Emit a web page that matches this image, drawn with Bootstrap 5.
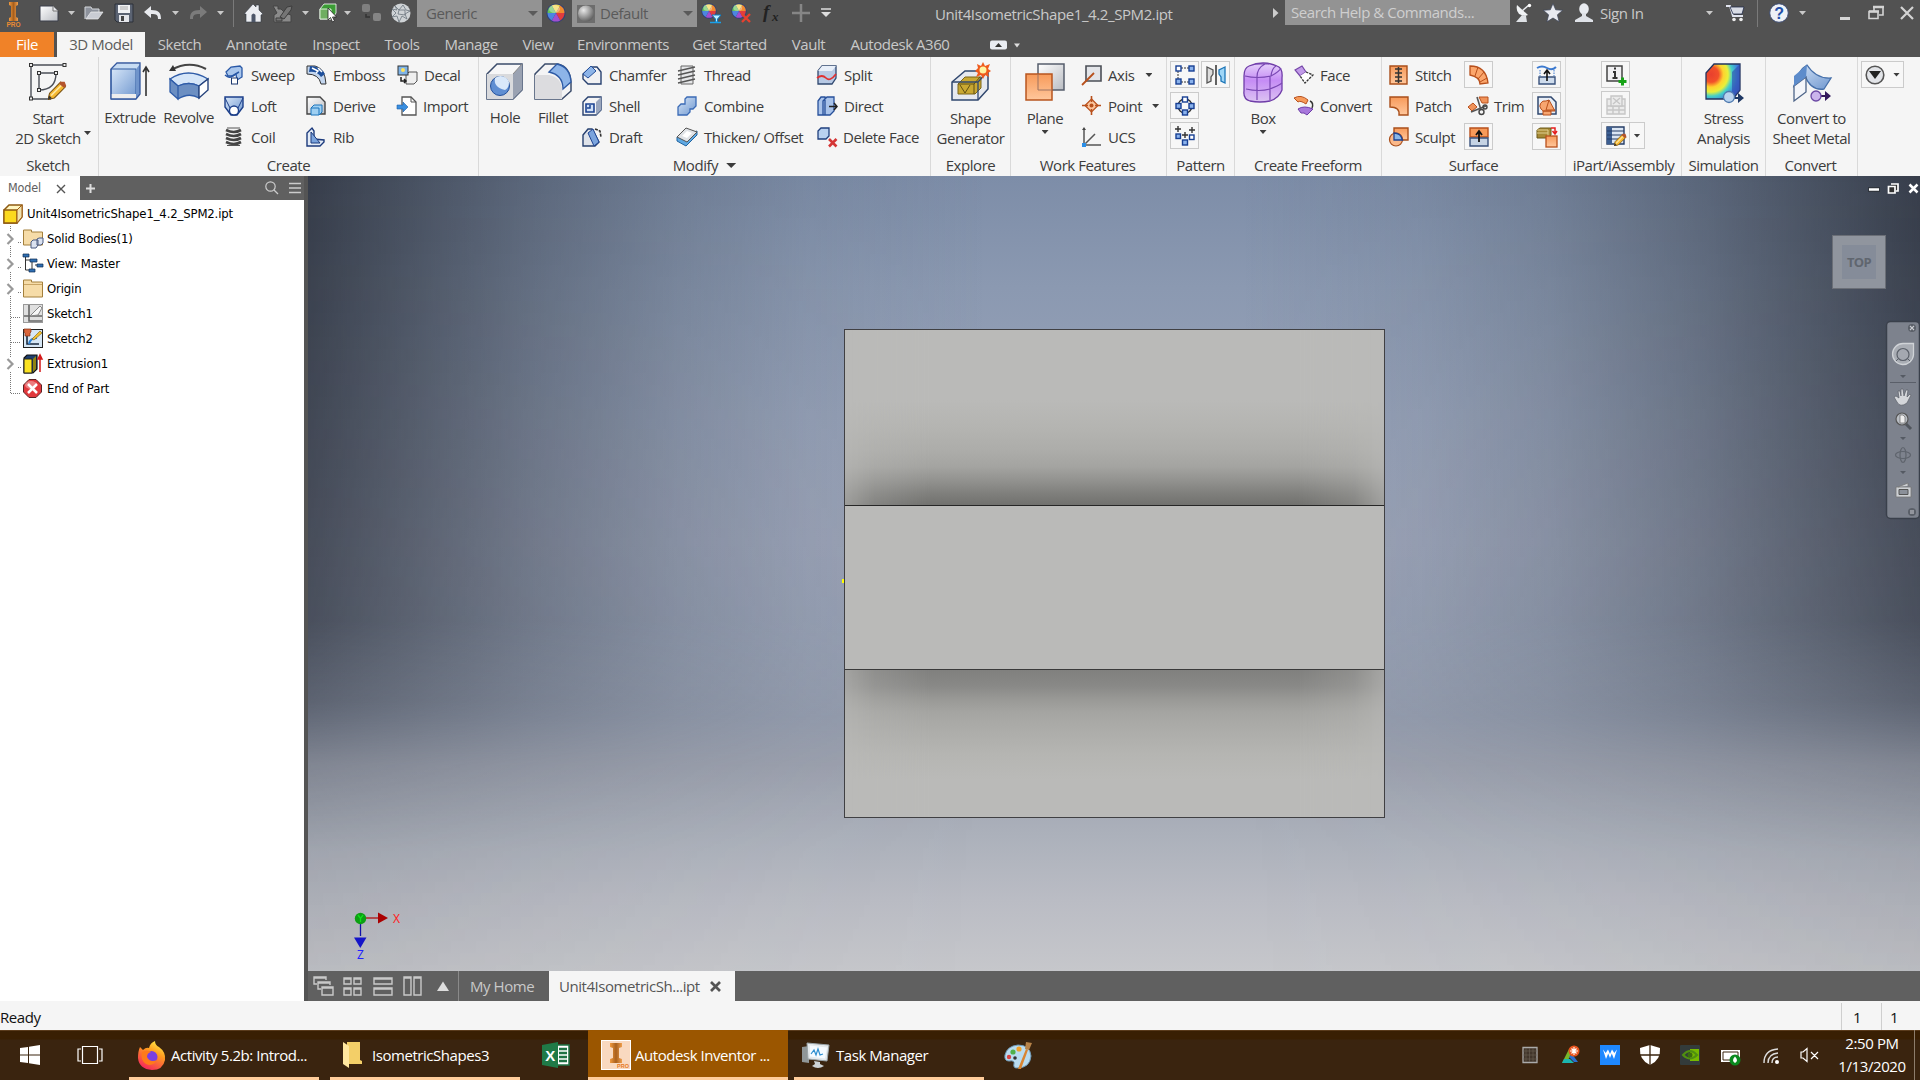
<!DOCTYPE html>
<html lang="en">
<head>
<meta charset="utf-8">
<title>Autodesk Inventor Professional</title>
<link href="https://cdn.jsdelivr.net/npm/bootstrap@5.3.0/dist/css/bootstrap.min.css" rel="stylesheet">
<style>
html,body{height:100%}
body{font-family:"Open Sans","Noto Sans",sans-serif;font-size:15px;letter-spacing:-.45px;line-height:20px;color:#3c3c3c;overflow:hidden;background:#f5f5f5;width:1920px;height:1080px}
svg{display:block;flex:none;overflow:visible}
.i20{width:20px;height:20px}.i40{width:40px;height:40px}
.topbar{height:32px;background:#525252;color:#c9c9c9;align-items:flex-start}
.topbar>svg{margin-top:3px}
.topbar>svg.app-logo{margin-top:2px}
.topbar>.tri{margin-top:11px}
.m1{margin-left:1px}.m4{margin-left:4px}.m5{margin-left:5px}.m6{margin-left:6px}.m7{margin-left:7px}.m8{margin-left:8px}.m9{margin-left:9px}.m10{margin-left:10px}.m11{margin-left:11px}.m12{margin-left:12px}.m18{margin-left:18px}.m20{margin-left:20px}.m22{margin-left:22px}.m26{margin-left:26px}.m27{margin-left:27px}.m34{margin-left:34px}.m37{margin-left:37px}.m56{margin-left:56px}.m103{margin-left:103px}
.tri{width:7px;height:4px;background:currentColor;clip-path:polygon(0 0,100% 0,50% 100%);flex:none}
.tri-l{width:10px;height:5px}
.vline{width:1px;height:27px;background:#7a7a7a;flex:none}
.combo{width:125px;height:27px;background:#939393;color:#5a5a5a;padding:0 4px 0 9px;line-height:25px;flex:none}
.combo-look{padding-left:5px}
.doc-title{width:236px;line-height:29px;white-space:nowrap;letter-spacing:-.4px}
.search-field{width:225px;height:25px;line-height:25px;background:#939393;color:#cfcfcf;padding-left:6px;white-space:nowrap;flex:none}
.signin{width:50px;line-height:26px}
.tabrow{height:25px;background:#525252;color:#c9c9c9}
.rtab{height:25px;line-height:25px;text-align:center;white-space:nowrap;flex:none}
.t-file{width:54px;background:#f08228;color:#fff;margin-right:3px}
.t-model{width:88px;background:#f5f5f5;color:#5c5c5c;margin-right:1px}
.w48{width:48px}.w56{width:56px}.w59{width:59px}.w60{width:60px}.w61{width:61px}.w67{width:67px}.w68{width:68px}.w72{width:72px}.w75{width:75px}.w78{width:78px}.w82{width:82px}.w87{width:87px}.w91{width:91px}.w95{width:95px}.w96{width:96px}.w99{width:99px}.w114{width:114px}.w124{width:124px}.w140{width:140px}
.ribbon{height:119px;background:#f5f5f5;white-space:nowrap}
.grp{border-right:1px solid #d9d9d9;height:119px;flex:none}
.grp-body{height:98px;padding-top:3px}
.grp-title{line-height:21px;height:21px;text-align:center}
.g-sketch{width:99px}.g-sketch .grp-title{padding-right:2px}
.sketch-arrow{margin:71px 0 0 -12px}
.g-create{width:380px}.g-modify{width:452px}.g-explore{width:80px}.g-work{width:156px}.g-pattern{width:68px}.g-free{width:147px}.g-surface{width:184px}.g-ipart{width:116px}.g-sim{width:84px}.g-conv{width:92px}
.g-work .grp-title,.g-conv .grp-title{padding-right:2px}
.pl2{padding-left:2px}.pl3{padding-left:3px}.pl4{padding-left:4px}.pl7{padding-left:7px}.pl8{padding-left:8px}.pl9{padding-left:9px}.pl11{padding-left:11px}.pl13{padding-left:13px}.pl23{padding-left:23px}.pl35{padding-left:35px}
.big{display:flex;flex-direction:column;align-items:center;text-align:center;flex:none}
.big svg{margin-top:2px}
.big .cap{margin-top:5px;line-height:20px}
.big .cap2{margin-top:6px;line-height:20px}
.big .tri{margin-top:2px}
.tool-col{display:flex;flex-direction:column;flex:none}
.tool{display:flex;align-items:center;height:31px;padding-bottom:1px}
.tool .lbl{margin-left:7px;line-height:18px;padding-bottom:1px}
.tool .near{margin-left:6px}
.ibtn{width:29px;height:27px;border:1px solid #cbcbcb;background:#f7f7f7;display:flex;align-items:center;justify-content:center;margin:1px 2px 3px 0;flex:none}
.ibtn.split-l{margin-right:0}
.ibtn.split-r{width:16px;margin-left:-1px}
.ibtn.wide{width:43px}
.workspace{height:825px}
.sidepane{width:304px;background:#fff;flex:none}
.pane-head{height:24px;background:#606060}
.pane-tab{width:80px;height:24px;background:#fff;color:#606060;font-size:12.5px;padding-left:8px;font-family:"DejaVu Sans Condensed","DejaVu Sans",sans-serif;font-stretch:condensed;letter-spacing:-.15px}
.pane-x{margin:3px 0 0 16px}
.pane-tools{margin-right:1px}
.tree{font-family:"DejaVu Sans Condensed","DejaVu Sans",sans-serif;font-stretch:condensed;font-size:13px;color:#000;letter-spacing:-.15px;padding-top:1px}
.tree-lines{left:0;top:0}
.node{height:25px;display:flex;align-items:center;white-space:nowrap}
.node svg.i20{margin-right:4px}
.splitter{width:4px;background:#545454;flex:none}
.viewport{height:795px;position:relative;overflow:hidden;background:linear-gradient(180deg,#7d8da8 0%,#8b99b1 14%,#96a1b7 30%,#9ca4b8 46%,#98a1b4 58%,#959dae 68%,#9ca1ae 74%,#acb1bb 83%,#babcc4 91%,#c6c7cb 100%)}
.vignette{position:absolute;inset:0;background:linear-gradient(90deg,rgba(44,49,60,.87) 0,rgba(47,53,64,.7) 6%,rgba(54,62,75,.48) 14%,rgba(72,83,98,.28) 23%,rgba(90,103,120,.13) 31%,rgba(110,120,140,0) 42%,rgba(110,120,140,0) 58%,rgba(90,103,120,.13) 69%,rgba(72,83,98,.28) 77%,rgba(54,62,75,.48) 86%,rgba(47,53,64,.7) 94%,rgba(44,49,60,.87) 100%);-webkit-mask-image:linear-gradient(180deg,#000 0,rgba(0,0,0,.92) 30%,rgba(0,0,0,.84) 56%,rgba(0,0,0,.62) 66%,rgba(0,0,0,.28) 74%,rgba(0,0,0,.13) 85%,rgba(0,0,0,.09) 100%);mask-image:linear-gradient(180deg,#000 0,rgba(0,0,0,.92) 30%,rgba(0,0,0,.84) 56%,rgba(0,0,0,.62) 66%,rgba(0,0,0,.28) 74%,rgba(0,0,0,.13) 85%,rgba(0,0,0,.09) 100%)}
.solid-part{position:absolute;left:536px;top:153px;width:541px;height:489px;border:1px solid #404043;background:#babab8;display:flex;flex-direction:column}
.face{position:relative}
.f1{height:175px}.f2{height:165px;border-top:1px solid #262626;border-bottom:1px solid #3a3a3a}.f3{flex:1}
.f1:before,.f3:before{content:"";position:absolute;inset:0;-webkit-mask-image:linear-gradient(90deg,rgba(0,0,0,.4) 0,rgba(0,0,0,.75) 30px,#000 85px,#000 calc(100% - 85px),rgba(0,0,0,.75) calc(100% - 30px),rgba(0,0,0,.35) 100%);mask-image:linear-gradient(90deg,rgba(0,0,0,.4) 0,rgba(0,0,0,.75) 30px,#000 85px,#000 calc(100% - 85px),rgba(0,0,0,.75) calc(100% - 30px),rgba(0,0,0,.35) 100%)}
.f1:before{background:linear-gradient(180deg,#babab8 0,#babab8 40%,#b4b4b1 56%,#adadaa 68%,#a4a4a1 78%,#92928f 86%,#80807d 93%,#71716e 100%)}
.f3:before{background:linear-gradient(180deg,#80807e 0,#898987 11%,#999996 20%,#a5a5a2 29%,#adadaa 42%,#b5b5b2 57%,#babab8 75%)}
.origin-dot{position:absolute;left:534px;top:403px;width:2px;height:4px;background:#ff0}
.triad{position:absolute;left:42px;top:730px}
.mdi{position:absolute;right:2px;top:7px}
.cube{position:absolute;left:1524px;top:59px;width:54px;height:54px;background:#90959e;border:1px solid #6b6f77;display:flex;align-items:center;justify-content:center}
.cube div{width:34px;height:34px;background:#858c99;color:#60666f;font-size:13px;font-weight:700;line-height:35px;text-align:center;letter-spacing:-.6px}
.navpal{position:absolute;left:1578px;top:145px}
.docbar{height:30px;background:#606060;color:#c9c9c9;line-height:30px;white-space:nowrap}
.home-tab{width:91px;height:30px;border-left:1px solid #8a8a8a;padding-left:11px}
.doc-tab{width:186px;height:30px;background:#f5f5f5;color:#565656;padding-left:10px}
.statusbar{height:29px;background:#f5f5f5;color:#111;line-height:32px}
.cell{width:40px;height:27px;margin-top:2px;border-left:1px solid #cfcfcf;line-height:28px;padding-left:11px}
.cell-last{width:38px;padding-left:8px;margin-right:1px}
.taskbar{height:50px;background:linear-gradient(180deg,#5a3b1c 0,#5a3b1c 1px,#391f03 1px,#391f03 9px,#3a240f 10px,#3a240f 100%);color:#fff;white-space:nowrap}
.task{width:190px;height:50px;display:flex;align-items:center;border-bottom:3px solid #ffcd9b;flex:none;padding-top:3px}
.task-on{background:#9b5600;width:200px}
.clock{width:84px;line-height:23px;margin-left:8px;letter-spacing:-.4px}
.peek{width:1px;height:50px;background:#8d7d6c;margin-right:5px}
</style>
</head>
<body class="d-flex flex-column">
<svg width="0" height="0" class="position-absolute">
<defs>
<linearGradient id="gb" x1="0" y1="0" x2="1" y2="1"><stop offset="0" stop-color="#d7e6f8"/><stop offset="1" stop-color="#6f97cf"/></linearGradient>
<linearGradient id="gg" x1="0" y1="0" x2="1" y2="1"><stop offset="0" stop-color="#fff"/><stop offset="1" stop-color="#b9bcc2"/></linearGradient>
<linearGradient id="go" x1="0" y1="0" x2="0" y2="1"><stop offset="0" stop-color="#f79a5a"/><stop offset="1" stop-color="#ffc79c"/></linearGradient>
<linearGradient id="gp" x1="0" y1="0" x2="0" y2="1"><stop offset="0" stop-color="#e6d2fa"/><stop offset=".45" stop-color="#c58cf5"/><stop offset="1" stop-color="#dcc4f2"/></linearGradient>
<radialGradient id="ball" cx=".35" cy=".3" r=".8"><stop offset="0" stop-color="#e8e8e8"/><stop offset="1" stop-color="#555"/></radialGradient>
<linearGradient id="ff" x1=".8" y1="0" x2=".3" y2="1"><stop offset="0" stop-color="#fff24a"/><stop offset=".4" stop-color="#ff9a1f"/><stop offset="1" stop-color="#f5245c"/></linearGradient>
<linearGradient id="inv" x1="0" y1="0" x2="1" y2="0"><stop offset="0" stop-color="#f19a3e"/><stop offset=".5" stop-color="#a85f1c"/><stop offset="1" stop-color="#f0a04e"/></linearGradient>
<radialGradient id="str" cx=".15" cy=".3" r="1"><stop offset="0" stop-color="#e8402e"/><stop offset=".22" stop-color="#f2502a"/><stop offset=".36" stop-color="#ffd22e"/><stop offset=".5" stop-color="#e8f03a"/><stop offset=".62" stop-color="#45d0c8"/><stop offset=".8" stop-color="#3d7fdc"/><stop offset="1" stop-color="#3a54c0"/></radialGradient>
<symbol id="wheel" viewBox="0 0 20 20"><circle cx="10" cy="10" r="9.6" fill="#2f3f78"/><g transform="translate(10 10)"><path d="M0 0L-4.200-7.400A8.500 8.500 0 0 1 4.200-7.400z" fill="#f3d64b"/><path d="M0 0L4.200-7.400A8.500 8.500 0 0 1 8.500 0z" fill="#f28b30"/><path d="M0 0L8.500 0A8.500 8.500 0 0 1 4.200 7.400z" fill="#e33d3d"/><path d="M0 0L4.200 7.400A8.500 8.500 0 0 1-4.200 7.400z" fill="#a04fd0"/><path d="M0 0L-4.200 7.400A8.500 8.500 0 0 1-8.500 0z" fill="#4c86e0"/><path d="M0 0L-8.500 0A8.500 8.500 0 0 1-4.200-7.400z" fill="#63c25c"/></g><ellipse cx="8.500" cy="6" rx="5.500" ry="4" fill="#fff" opacity=".35"/></symbol>
<symbol id="pencil" viewBox="0 0 12 12"><path d="M0 12l1-4 7-7 3 3-7 7z" fill="#f6b931" stroke="#7c5313" stroke-width=".7"/><path d="M2 9.500l7-7" stroke="#ffe9a8" stroke-width="1"/><path d="M7 2l1-1.200 2.500 0 1 2.500-1.300 1.500z" fill="#b4542c"/><path d="M0 12l.8-2.500 1.700 1.700z" fill="#333"/></symbol>
</defs>
</svg>

<!-- title bar -->
<header class="topbar d-flex flex-shrink-0">
<svg class="m6 app-logo" width="15" height="26" viewBox="0 0 15 26"><path d="M3 0h9v3l-2 1v11l2 1v3H3v-3l2-1V4L3 3z" fill="url(#inv)"/><text x="7.500" y="25" text-anchor="middle" font-family="Liberation Sans" font-size="6.500" font-weight="700" fill="#e88a33" letter-spacing="0">PRO</text></svg>
<svg class="i20 m18" viewBox="0 0 20 20"><path d="M1 3h13l5 5v10H1z" fill="url(#gg)" stroke="#3a3f4a"/><path d="M14 3v5h5" fill="#e9e9ec" stroke="#777"/></svg>
<i class="tri m9"></i>
<svg class="i20 m9" viewBox="0 0 20 20"><path d="M1 16V4h6l1 2h7v3" fill="#8d929c" stroke="#d5d8dc"/><path d="M2 16l5-7h12l-5 7z" fill="#c9ccd3" stroke="#eee" stroke-width=".7"/></svg>
<svg class="i20 m10" viewBox="0 0 20 20"><path d="M1 1h18v18H3l-2-2z" fill="#5b6372" stroke="#2d3139"/><path d="M4 2h12v8H4z" fill="#f0f1f3"/><path d="M6 4h8M6 6h8" stroke="#aaa"/><path d="M5 12h10v7H5z" fill="#e4e6ea"/><path d="M7 13h3v5H7z" fill="#444"/></svg>
<svg class="i20 m10" viewBox="0 0 20 20"><path d="M0 9l7-6v4c8 0 10 3 10 9h-3c0-4-1-5-7-5v4z" fill="#e8eaee"/></svg>
<i class="tri m8"></i>
<svg class="i20 m10" viewBox="0 0 20 20"><path d="M18 9l-7-6v4c-8 0-10 3-10 9h3c0-4 1-5 7-5v4z" fill="#7b7b7b"/></svg>
<i class="tri m8"></i>
<i class="vline m9"></i>
<svg class="i20 m10" viewBox="0 0 20 20"><path d="M0 11L9 1l3 3V2h3v5l4 4-2 1v7H2v-8z" fill="#eceef2" stroke="#343943" stroke-width=".6"/><path d="M7.500 19v-7q2-3 4 0v7z" fill="#4d5668"/></svg>
<svg class="i20 m9" viewBox="0 0 20 20"><path d="M0 3h5v3h3l4 4 6 2v7H1v-7l3-2z" fill="#8a8a8a" stroke="#444"/><path d="M7 14l7-10 5-1-1 4-7 9zM3 15h6v3H3z" fill="#757575" stroke="#3d3d3d"/></svg>
<i class="tri m9"></i>
<svg class="i20 m9" viewBox="0 0 20 20"><path d="M2 6l4-5h12v9l-4 6H2z" fill="#3b9b35" stroke="#fff" stroke-width=".8"/><path d="M2 6h11v10H2z" fill="#6fae60" stroke="#d8efd4"/><path d="M10 5v12l2.500-2.500 2 4.500 2-1-2-4h4z" fill="#fff" stroke="#222" stroke-width=".8"/></svg>
<i class="tri m6"></i>
<svg class="i20 m10" viewBox="0 0 20 20"><rect x="1" y="1" width="8" height="8" rx="2" fill="#7f7f7f"/><rect x="12" y="10" width="8" height="8" rx="2" fill="#858585"/><path d="M5 11v3h4" fill="none" stroke="#333" stroke-width="1.500"/></svg>
<svg class="i20 m10" viewBox="0 0 20 20"><circle cx="10" cy="10" r="9.500" fill="#cfd3d6"/><path d="M4 3l4 4 4-5 3 5 4 1-5 3 2 5-5-3-3 6-2-6-5 1 4-4-4-4 5 1zM8 7l6 0 0 5-7-1z" fill="none" stroke="#6b757d" stroke-width=".8"/></svg>
<div class="combo m6 d-flex align-items-center justify-content-between"><span>Generic</span><i class="tri tri-l"></i></div>
<svg class="i20 m4"><use href="#wheel"/></svg>
<div class="combo combo-look m6 d-flex align-items-center"><svg width="18" height="18"><rect width="18" height="18" fill="#6d6d6d"/><circle cx="9" cy="8.500" r="8" fill="url(#ball)"/></svg><span class="m5 flex-grow-1">Default</span><i class="tri tri-l"></i></div>
<svg class="i20 m4" viewBox="0 0 20 20"><use href="#wheel" width="16" height="16"/><path d="M11 12h9l-3.500 4v3h-2v-3z" fill="#bfefff" stroke="#0c80c8"/><path d="M9 19.500h11" stroke="#1aa0e8" stroke-width="1.500"/></svg>
<svg class="i20 m10" viewBox="0 0 20 20"><use href="#wheel" width="16" height="16"/><path d="M11 11l8 8M19 11l-8 8" stroke="#e8402e" stroke-width="2.300"/></svg>
<svg class="i20 m12" viewBox="0 0 20 20"><text x="0" y="15" font-family="Liberation Serif" font-style="italic" font-weight="700" font-size="19" fill="#222">f</text><text x="9" y="18" font-family="Liberation Serif" font-style="italic" font-weight="700" font-size="13" fill="#222">x</text></svg>
<svg class="i20 m8" viewBox="0 0 20 20"><path d="M10 1v18M1 10h18" stroke="#868686" stroke-width="2.500"/></svg>
<svg class="m9" width="12" height="20" viewBox="0 0 12 20"><path d="M1 6h10" stroke="#ddd" stroke-width="1.500"/><path d="M1 9h10l-5 5z" fill="#ddd"/></svg>
<div class="doc-title m103">Unit4IsometricShape1_4.2_SPM2.ipt</div>
<svg width="6" height="20" class="ms-auto"><path d="M0 5l5.500 5-5.500 5z" fill="#ccc"/></svg>
<div class="search-field m6">Search Help &amp; Commands...</div>
<svg class="i20 m4" viewBox="0 0 20 20"><path d="M3 2Q1 12 11 13l3-1z" fill="#f1f3f5"/><path d="M8 8l7-6" stroke="#e9ebee" stroke-width="1.500"/><path d="M8 12l-6 7h11l-1-6z" fill="#dfe2e6"/><circle cx="15.500" cy="2.500" r="1.700" fill="#fff"/></svg>
<svg class="i20 m9" viewBox="0 0 20 20"><path d="M10 0.500l2.700 6.300 7 .5-5.300 4.500 1.700 7L10 15l-6.100 3.800 1.700-7L.3 7.300l7-.5z" fill="#e8eaf0" stroke="#3b4458" stroke-width=".7"/></svg>
<svg class="i20 m11" viewBox="0 0 20 20"><ellipse cx="10" cy="6" rx="4.800" ry="5.700" fill="#e8ebf0"/><path d="M8 10h4v3l7 4v2H1v-2l7-4z" fill="#dfe2e8"/></svg>
<span class="m6 signin">Sign In</span>
<i class="tri m56"></i>
<svg class="i20 m12" viewBox="0 0 20 20"><path d="M1 3h4l3 10h10" fill="none" stroke="#e1e4ee" stroke-width="2"/><path d="M5 4h14l-2 7H8z" fill="#d9dde6" stroke="#222c4a" stroke-width=".8"/><circle cx="9" cy="16.500" r="1.800" fill="#eee"/><circle cx="16" cy="16.500" r="1.800" fill="#eee"/></svg>
<i class="vline m12"></i>
<svg class="i20 m11" viewBox="0 0 20 20"><circle cx="10" cy="10" r="9.300" fill="#eef1f6" stroke="#3b4a70"/><text x="10" y="15.500" text-anchor="middle" font-family="Liberation Sans" font-weight="700" font-size="16" fill="#2450a8">?</text></svg>
<i class="tri m10"></i>
<svg class="m34" width="80" height="20" viewBox="0 0 80 20"><path d="M0 15.500h10" stroke="#d4d4d4" stroke-width="3"/><path d="M34 8V4h9v8h-4M29 8.500h9v7h-9z" fill="none" stroke="#d4d4d4" stroke-width="1.600"/><path d="M33 4h11M29 8.500h10" stroke="#d4d4d4" stroke-width="2.500"/><path d="M61 4l12 12M73 4L61 16" stroke="#d4d4d4" stroke-width="2.200"/></svg>
</header>

<!-- ribbon tabs -->
<nav class="tabrow d-flex flex-shrink-0">
<div class="rtab t-file">File</div><div class="rtab t-model">3D Model</div><div class="rtab w67">Sketch</div><div class="rtab w87">Annotate</div><div class="rtab w72">Inspect</div><div class="rtab w60">Tools</div><div class="rtab w78">Manage</div><div class="rtab w56">View</div><div class="rtab w114">Environments</div><div class="rtab w99">Get Started</div><div class="rtab w59">Vault</div><div class="rtab w124">Autodesk A360</div>
<svg class="m27" width="32" height="25"><rect x="1" y="8.500" width="17" height="9" rx="2" fill="#e9ecf2"/><path d="M6 15l3.500-4 3.500 4z" fill="#333"/><path d="M25 11.500h6l-3 4z" fill="#ddd"/></svg>
</nav>

<!-- ribbon -->
<section class="ribbon d-flex flex-shrink-0">
<div class="grp g-sketch"><div class="grp-body d-flex">
<div class="big w96"><svg class="i40" viewBox="0 0 40 40"><path d="M3 37V3h34M3 37h20" fill="none" stroke="#4b4f57" stroke-width="1.400"/><path d="M11 11h17q0 17-17 17z" fill="none" stroke="#4b4f57" stroke-width="1.400"/><g fill="#eee" stroke="#333"><rect x="1.500" y="1.500" width="3" height="3"/><rect x="35" y="1.500" width="3" height="3"/><rect x="1.500" y="35" width="3" height="3"/><rect x="9.500" y="9.500" width="3" height="3"/><rect x="26.500" y="9.500" width="3" height="3"/><rect x="9.500" y="26.500" width="3" height="3"/></g><use href="#pencil" x="20" y="18" width="19" height="20"/></svg><div class="cap2">Start<br>2D Sketch</div></div>
<i class="tri sketch-arrow"></i>
</div><div class="grp-title">Sketch</div></div>

<div class="grp g-create"><div class="grp-body d-flex pl3">
<div class="big w56"><svg class="i40" viewBox="0 0 40 40"><path d="M1 7l6-5h23l-4 5z" fill="#c7dcf3"/><path d="M1 7h25v30H1z" fill="url(#gb)" stroke="#2e5a9f"/><path d="M1 32h25v5H1z" fill="#eee"/><path d="M26 7l4-5v29l-4 6z" fill="#6f94cb"/><path d="M1 37V7l6-6h23v31l-4 5z" fill="none" stroke="#3459a0" stroke-width="1.300"/><path d="M36 34V6M33 10l3-5 3 5" fill="none" stroke="#333" stroke-width="1.600"/></svg><div class="cap">Extrude</div></div>
<div class="big w61"><svg class="i40" viewBox="0 0 40 40"><path d="M2 8Q20-2 37 7" fill="none" stroke="#444" stroke-width="2"/><path d="M0 9l4-6 3 6z" fill="#333"/><path d="M1 17q18-12 38 0l-9 7q-10-5-21 0z" fill="#d6e6f8" stroke="#2f5ca8" stroke-width="1.300"/><path d="M1 17l8 7v13l-8-7zM9 24q11-5 21 0v12q-10-6-21 1z" fill="#6c8fc2" stroke="#2f5ca8" stroke-width="1.300"/><path d="M30 24l9-7v11l-9 8z" fill="#fff" stroke="#26437c" stroke-width="1.400"/></svg><div class="cap">Revolve</div></div>
<div class="tool-col w82 m5">
<div class="tool"><svg class="i20" viewBox="0 0 20 20"><path d="M2 7l5-5 9-1 2 2v9l-5 3-1-6-3 2-5 0z" fill="#a9c6ec" stroke="#2857a6" stroke-width="1.300"/><path d="M1 10q5 4 7 1l7-4" fill="none" stroke="#2857a6" stroke-width="1.500"/><rect x="7.500" y="13" width="6" height="6" fill="#fff" stroke="#1d3970"/></svg><span class="lbl">Sweep</span></div>
<div class="tool"><svg class="i20" viewBox="0 0 20 20"><path d="M1 1h18v10l-6 8H7l-6-8z" fill="url(#gb)" stroke="#1c3f8a" stroke-width="1.400"/><path d="M1 2l5 10M19 2l-5 10" stroke="#1c3f8a"/><circle cx="10" cy="14.500" r="4.500" fill="#fff" stroke="#1c3f8a" stroke-width="1.300"/></svg><span class="lbl">Loft</span></div>
<div class="tool"><svg class="i20" viewBox="0 0 20 20"><path d="M2 3q8 4 15 0M2 7q8 4 15 0M2 11q8 4 15 0M2 15q8 4 15 0" fill="none" stroke="#444" stroke-width="2.600"/><path d="M3 1h13M3 18.500h13" stroke="#555"/></svg><span class="lbl">Coil</span></div>
</div>
<div class="tool-col w91">
<div class="tool"><svg class="i20" viewBox="0 0 20 20"><path d="M1 1h8q10 2 11 18h-5Q13 9 1 9z" fill="#c3d6ef" stroke="#333"/><path d="M3 7q8-1 12 5l4-3Q14 1 4 1z" fill="#1d4f9c"/><path d="M6 3l6 3-2 2M12 3l4 4" stroke="#fff" stroke-width="1.500" fill="none"/></svg><span class="lbl">Emboss</span></div>
<div class="tool"><svg class="i20" viewBox="0 0 20 20"><path d="M1 1h13l5 5v12H1z" fill="url(#gg)" stroke="#444" stroke-width="1.400"/><path d="M5 12l3-3h8v7l-3 3H5z" fill="#9fd0f2" stroke="#1b75bd"/><path d="M5 12h8v7" fill="none" stroke="#1b75bd"/></svg><span class="lbl">Derive</span></div>
<div class="tool"><svg class="i20" viewBox="0 0 20 20"><path d="M1 19V6l5-5 2 3v8l10 1v2l-4 4z" fill="#e4ecf7" stroke="#1c3a7c" stroke-width="1.400"/><path d="M5 5v11h9z" fill="#7ba4dd" stroke="#1c3a7c"/></svg><span class="lbl">Rib</span></div>
</div>
<div class="tool-col">
<div class="tool"><svg class="i20" viewBox="0 0 20 20"><path d="M9 10l3-3h8v9l-3 3H9z" fill="#eee" stroke="#555"/><rect x="1" y="1" width="10" height="9" fill="#7fb4e8" stroke="#333"/><circle cx="6" cy="5" r="2" fill="#ffe25a"/><path d="M4 12v4h5M7 14l2 2-2 2" fill="none" stroke="#222" stroke-width="1.500"/></svg><span class="lbl">Decal</span></div>
<div class="tool"><svg class="i20" viewBox="0 0 20 20"><path d="M5 1h9l5 5v13H5z" fill="#fff" stroke="#555" stroke-width="1.300"/><path d="M14 1v5h5" fill="none" stroke="#555"/><path d="M0 9h6V6l5 5-5 5v-3H0z" fill="#3b8fe0" stroke="#1c5fa8" stroke-width=".6"/></svg><span class="lbl near">Import</span></div>
</div></div><div class="grp-title">Create</div></div>

<div class="grp g-modify"><div class="grp-body d-flex pl2">
<div class="big w48"><svg class="i40" viewBox="0 0 40 40"><path d="M2 12L12 2h25v26L28 37H2z" fill="#f6f6f7" stroke="#3b4c6b" stroke-width="1.500"/><path d="M28 12v25l9-9V2z" fill="#9aa2b2"/><path d="M2 12h26v25H2z" fill="#d9dadd"/><path d="M28 12L37 2" stroke="#888"/><circle cx="15" cy="24" r="9.500" fill="#5f8ed2" stroke="#24519c"/><path d="M10 16q-2 9 10 12 4-2 4-8a9 9 0 0 0-14-4z" fill="#d9e8fa"/></svg><div class="cap">Hole</div></div>
<div class="big w48"><svg class="i40" viewBox="0 0 40 40"><path d="M2 12L12 2h13q12 3 13 18v9l-9 8H2z" fill="#f4f4f5" stroke="#3b4c6b" stroke-width="1.500"/><path d="M2 13h14q12 2 13 14v10H2z" fill="#dcdcdf"/><path d="M16 10l8-8q13 3 14 18l-8 7Q30 13 16 10z" fill="#8db4e8" stroke="#2d5aa5" stroke-width="1.300"/></svg><div class="cap">Fillet</div></div>
<div class="tool-col w95 m5">
<div class="tool"><svg class="i20" viewBox="0 0 20 20"><path d="M1 9l8-7h6l4 5v12H6l-5-5z" fill="#f1f1f3" stroke="#27406f" stroke-width="1.400"/><path d="M1 9l8-8 5 5-8 7z" fill="#8db4e8" stroke="#27509a"/></svg><span class="lbl">Chamfer</span></div>
<div class="tool"><svg class="i20" viewBox="0 0 20 20"><path d="M1 6l5-5h13v13l-5 5H1z" fill="#f4f4f5" stroke="#27406f" stroke-width="1.400"/><path d="M14 6v13l5-5V1z" fill="#9aa6bd"/><path d="M4 8h8v8H4z" fill="#cfe0f7" stroke="#1d4391" stroke-width="1.600"/><path d="M8 9v3H5" fill="none" stroke="#1d4391" stroke-width="1.500"/></svg><span class="lbl">Shell</span></div>
<div class="tool"><svg class="i20" viewBox="0 0 20 20"><path d="M1 8l5-6h4l7 13-4 4H1z" fill="#dfe3ea" stroke="#27406f" stroke-width="1.400"/><path d="M6 6l5-4 6 13-5 4z" fill="#7ba4dd" stroke="#1d4391"/><path d="M13 2l5 2 1 6" fill="none" stroke="#333" stroke-width="1.600" stroke-dasharray="3 1"/></svg><span class="lbl">Draft</span></div>
</div>
<div class="tool-col w140">
<div class="tool"><svg class="i20" viewBox="0 0 20 20"><path d="M4 1h12v18H4z" fill="#e5e6e8" stroke="#666"/><path d="M1 6l17-4M1 10l17-4M1 14l17-4M1 18l17-4" stroke="#555" stroke-width="1.300"/></svg><span class="lbl">Thread</span></div>
<div class="tool"><svg class="i20" viewBox="0 0 20 20"><path d="M8 3l2-2h9v9l-3 3h-3v3l-3 3H1v-8l3-3h4z" fill="url(#gb)" stroke="#3a6ab5" stroke-width="1.300"/></svg><span class="lbl">Combine</span></div>
<div class="tool"><svg class="i20" viewBox="0 0 20 20"><path d="M0 10v4l9 5 11-11V4z" fill="#5fa9e3" stroke="#20639f"/><path d="M0 10L9 1l11 4-10 10z" fill="#dfe2e6" stroke="#555"/><path d="M5 9l5-5 5 2-5 5z" fill="#fff"/></svg><span class="lbl">Thicken/ Offset</span></div>
</div>
<div class="tool-col">
<div class="tool"><svg class="i20" viewBox="0 0 20 20"><path d="M1 6l4-5h14v12l-4 6H1z" fill="#b7c9e4" stroke="#30486f" stroke-width="1.300"/><path d="M1 6l4-5h14l-4 5z" fill="#e8eff9"/><path d="M0 13q5-4 9 0t10-4" fill="none" stroke="#e03030" stroke-width="1.700"/></svg><span class="lbl">Split</span></div>
<div class="tool"><svg class="i20" viewBox="0 0 20 20"><path d="M1 5l3-4h4v18H1zM6 5l4-4h7v14l-4 4H6z" fill="#a9c3ea" stroke="#27509a" stroke-width="1.300"/><path d="M12 10.500h8M17 7l3 3.500-3 3.500" fill="none" stroke="#222" stroke-width="1.500"/></svg><span class="lbl">Direct</span></div>
<div class="tool"><svg class="i20" viewBox="0 0 20 20"><path d="M1 4l3-3h8v8l-3 3H1z" fill="#b9d1f1" stroke="#1f3f7d" stroke-width="1.300"/><path d="M12 12l7.500 7.500M19.500 12L12 19.500" stroke="#d43535" stroke-width="2.600"/></svg><span class="lbl near">Delete Face</span></div>
</div></div><div class="grp-title d-flex align-items-center justify-content-center"><span>Modify</span><i class="tri tri-l m8"></i></div></div>

<div class="grp g-explore"><div class="grp-body"><div class="big"><svg class="i40" viewBox="0 0 40 40"><path d="M1 20L14 9h23v18L27 38H1z" fill="#e6e9ef" stroke="#31486f" stroke-width="1.500"/><path d="M7 22l7-7h16v11l-6 6H7z" fill="#c9a832" stroke="#7a6518"/><path d="M7 22h16v10M23 22l6-7M9 23l5 8 5-8" fill="none" stroke="#5f4f12"/><path d="M1 20h26v18M27 20L37 9" fill="none" stroke="#31486f" stroke-width="1.300"/><path d="M32 0l2 4 5-2-2 5 3 2-3 2 1 4-4-2-2 4-2-4-5 2 2-4-3-2 3-3-1-4 4 2z" fill="#ef5a1c"/><circle cx="32" cy="8" r="3.500" fill="#fff3a0"/></svg><div class="cap2">Shape<br>Generator</div></div></div><div class="grp-title">Explore</div></div>

<div class="grp g-work"><div class="grp-body d-flex">
<div class="big w68"><svg class="i40" viewBox="0 0 40 40"><path d="M13 2h26v26H13z" fill="url(#gg)" stroke="#555d6c" stroke-width="1.500"/><path d="M1 12h26v26H1z" fill="url(#go)" stroke="#b8561f" stroke-width="1.500"/><path d="M13 12v16h14" fill="none" stroke="#9d7260"/></svg><div class="cap2">Plane</div><i class="tri"></i></div>
<div class="tool-col pl3">
<div class="tool"><svg class="i20" viewBox="0 0 20 20"><path d="M4 1h15v15H4z" fill="#e3e5e9" stroke="#4b4f57" stroke-width="1.600"/><path d="M0 20L12 8" stroke="#b8501c" stroke-width="1.800"/></svg><span class="lbl near">Axis</span><i class="tri m11"></i></div>
<div class="tool"><svg class="i20" viewBox="0 0 20 20"><path d="M9.500 3l6.500 6.500-6.500 6.500L3 9.500z" fill="#fbc49c" stroke="#b8501c" stroke-width="1.200"/><path d="M9.500 0v6M9.500 13v6M0 9.500h6M13 9.500h6" stroke="#b8501c" stroke-width="1.600"/><circle cx="9.500" cy="9.500" r="2" fill="#b8501c"/></svg><span class="lbl near">Point</span><i class="tri m10"></i></div>
<div class="tool"><svg class="i20" viewBox="0 0 20 20"><path d="M2 2v16h17M2 18L13 7" fill="none" stroke="#555" stroke-width="1.500"/><path d="M0 3l2-3 2 3z" fill="#444"/><rect y="16" width="4" height="4" fill="#2a8fe8"/></svg><span class="lbl near">UCS</span></div>
</div></div><div class="grp-title">Work Features</div></div>

<div class="grp g-pattern"><div class="grp-body pl3">
<div class="d-flex"><div class="ibtn"><svg class="i20" viewBox="0 0 20 20"><path d="M3 3h14M3 17h14M3 3v14" stroke="#333" stroke-dasharray="2 1"/><g fill="#8ab2ec" stroke="#173f93" stroke-width="1.400"><rect x="1" y="1" width="5" height="5" fill="#fff"/><rect x="14" y="1" width="5" height="5"/><rect x="1" y="14" width="5" height="5"/><rect x="14" y="14" width="5" height="5"/></g></svg></div><div class="ibtn"><svg class="i20" viewBox="0 0 20 20"><path d="M10 0v20" stroke="#222" stroke-width="1.400"/><path d="M1 2l6 3v4l-2 3v4l-4 2z" fill="#ddd" stroke="#555" stroke-width="1.300"/><path d="M19 2l-6 3v4l2 3v4l4 2z" fill="#9fd6f7" stroke="#1c76b8" stroke-width="1.300"/></svg></div></div>
<div class="ibtn"><svg class="i20" viewBox="0 0 20 20"><circle cx="10" cy="10" r="7" fill="none" stroke="#333" stroke-width="1.300"/><g fill="#8ab2ec" stroke="#173f93" stroke-width="1.400"><rect x="7.500" y="1" width="5" height="5" fill="#fff"/><rect x="14" y="7.500" width="5" height="5"/><rect x="1" y="7.500" width="5" height="5"/><rect x="7.500" y="14" width="5" height="5"/></g></svg></div>
<div class="ibtn"><svg class="i20" viewBox="0 0 20 20"><path d="M0 3h6M3 0v6M14 4h6M17 1v6M7 9h6M10 6v6" stroke="#333" stroke-width="1.400"/><g fill="#8ab2ec" stroke="#173f93" stroke-width="1.400"><rect x="1" y="8" width="4.500" height="4.500"/><rect x="14.500" y="9" width="4.500" height="4.500" fill="#fff"/><rect x="7.500" y="14" width="5" height="5"/></g></svg></div>
</div><div class="grp-title">Pattern</div></div>

<div class="grp g-free"><div class="grp-body d-flex">
<div class="big w56"><svg class="i40" viewBox="0 0 40 40"><path d="M6 4q14-6 28 0 6 2 5 12v12q-3 8-12 11-10 2-20 0-7-2-6-10V14q0-8 5-10z" fill="url(#gp)" stroke="#6f3da8" stroke-width="1.300"/><path d="M2 14q12 3 26 0 8-4 10-8M3 27q13 3 24 0 8-3 12-6M14 15v23M27 14v24M12 2l14 0M14 15Q14 6 22 2M28 14q1-8 5-10" fill="none" stroke="#7a48b4" stroke-width="1.200"/></svg><div class="cap2">Box</div><i class="tri"></i></div>
<div class="tool-col pl3">
<div class="tool"><svg class="i20" viewBox="0 0 20 20"><path d="M1 5l7-4 4 6-6 4z" fill="#c19be8" stroke="#7546a8" stroke-width="1.200"/><path d="M12 7l7 3-8 8-5-7" fill="#fff" stroke="#333" stroke-width="1.300" stroke-dasharray="2.500 1"/></svg><span class="lbl near">Face</span></div>
<div class="tool"><svg class="i20" viewBox="0 0 20 20"><path d="M0 2q7-4 14 2l-2 4Q6 4 4 6z" fill="#f79a5a" stroke="#b8501c"/><path d="M16 5q4 2 2 7" fill="none" stroke="#333" stroke-width="1.400"/><path d="M4 13q6-4 15 0l-6 6q-3-3-6-2z" fill="#a878dc" stroke="#6d3da6"/></svg><span class="lbl near">Convert</span></div>
</div></div><div class="grp-title">Create Freeform</div></div>

<div class="grp g-surface"><div class="grp-body d-flex pl7">
<div class="tool-col w75">
<div class="tool"><svg class="i20" viewBox="0 0 20 20"><path d="M1 1h17v18H1z" fill="url(#go)" stroke="#a94f1b" stroke-width="1.400"/><path d="M9.500 2v16M6 4h7M6 8h7M6 12h7M6 16h7" stroke="#333" stroke-width="1.500"/></svg><span class="lbl near">Stitch</span></div>
<div class="tool"><svg class="i20" viewBox="0 0 20 20"><path d="M1 1h18v18h-9q1-8-9-8z" fill="url(#go)" stroke="#a94f1b" stroke-width="1.400"/></svg><span class="lbl near">Patch</span></div>
<div class="tool"><svg class="i20" viewBox="0 0 20 20"><path d="M5 1h14v12H5z" fill="url(#go)" stroke="#a94f1b" stroke-width="1.400"/><circle cx="7" cy="12.500" r="6.500" fill="#fbb98a" stroke="#a94f1b" stroke-width="1.200"/><path d="M5 6q7 0 8.500 7H5z" fill="#8ab7e8" stroke="#1d4391" stroke-width="1.300"/></svg><span class="lbl near">Sculpt</span></div>
</div>
<div class="tool-col w68">
<div class="ibtn"><svg class="i20" viewBox="0 0 20 20"><path d="M1 1q16 0 18 17l-8 1Q11 12 1 10z" fill="#fba66c" stroke="#b8501c" stroke-width="1.300"/><path d="M6 11L9 2M9 14l6-7M11 17l7-4" stroke="#b8501c"/></svg></div>
<div class="tool pl4"><svg class="i20" viewBox="0 0 20 20"><path d="M0 11l5-4 4 4-5 4zM11 1h9v6h-6z" fill="#f0935a" stroke="#b8501c"/><path d="M9 1l4 13M3 16l15-6" stroke="#555" stroke-width="1.600"/><circle cx="13.500" cy="16" r="2.500" fill="none" stroke="#444" stroke-width="1.400"/><circle cx="17" cy="11" r="2" fill="none" stroke="#444" stroke-width="1.400"/></svg><span class="lbl near">Trim</span></div>
<div class="ibtn"><svg class="i20" viewBox="0 0 20 20"><path d="M1 1h18v9H1z" fill="#f79a5a" stroke="#b8501c" stroke-width="1.400"/><path d="M1 11h18v8H1z" fill="#c5d3e4" stroke="#39527c" stroke-width="1.400"/><path d="M10 15V5M7 8l3-4 3 4" fill="none" stroke="#111" stroke-width="1.800"/></svg></div>
</div>
<div class="tool-col">
<div class="ibtn"><svg class="i20" viewBox="0 0 20 20"><path d="M0 3q5-3 10 0t9-1" fill="none" stroke="#3c7ad0" stroke-width="2"/><path d="M3 5v6M17 5v6" stroke="#3c7ad0" stroke-dasharray="1.500 1"/><path d="M2 12h16v7H2z" fill="#cfdcec" stroke="#39527c" stroke-width="1.400"/><path d="M10 16V6M7 9l3-4 3 4" fill="none" stroke="#111" stroke-width="1.600"/></svg></div>
<div class="ibtn"><svg class="i20" viewBox="0 0 20 20"><path d="M1 1h13l5 5v12H1z" fill="#e8edf5" stroke="#31486f" stroke-width="1.500"/><path d="M4 13a5 5 0 0 1 5-8l3-1 6 11H9q-3 1-5-2zM6 15h8v4H6z" fill="#f7a570" stroke="#b8501c"/><path d="M12 4L9 14h9" fill="none" stroke="#b8501c"/></svg></div>
<div class="ibtn"><svg class="i20" viewBox="0 0 20 20"><path d="M0 3l3-2h11v7l-3 3H0z" fill="#a78a35" stroke="#6b5818"/><path d="M0 3h11v8M0 6h11" fill="none" stroke="#e0cf90"/><rect x="9" y="9" width="11" height="11" fill="url(#go)" stroke="#b8501c" stroke-width="1.300"/><path d="M14 1h4v5M15.500 4l2.500 3 2-3" fill="none" stroke="#e51f1f" stroke-width="1.500"/></svg></div>
</div></div><div class="grp-title">Surface</div></div>

<div class="grp g-ipart"><div class="grp-body pl35">
<div class="ibtn"><svg class="i20" viewBox="0 0 20 20"><path d="M1 1h15v15H1z" fill="#f0f0f2" stroke="#444" stroke-width="1.500"/><path d="M7 7h2v6M6.500 13h5M8 3.500h2" fill="none" stroke="#333" stroke-width="2"/><path d="M16.500 12.500v8M12.500 16.500h8" stroke="#17a317" stroke-width="3"/></svg></div>
<div class="ibtn"><svg class="i20" viewBox="0 0 20 20" fill="#ebebeb" stroke="#c6c6c6" stroke-width="1.400"><path d="M1 4h18v15H1zM1 11h18M1 15h18M7 11v8M13 11v8"/><path d="M5 1h11v10H5z"/><path d="M7 3l7 6M14 3L7 9"/></svg></div>
<div class="d-flex"><div class="ibtn split-l"><svg class="i20" viewBox="0 0 20 20"><path d="M1 1h17v17H1z" fill="#dbe6f4" stroke="#243c66" stroke-width="1.400"/><path d="M1 1h5v17H1z" fill="#3c5f92"/><path d="M1 5h17M1 9h17M1 13h17" stroke="#243c66"/><use href="#pencil" x="8" y="7" width="13" height="13"/></svg></div><div class="ibtn split-r"><i class="tri"></i></div></div>
</div><div class="grp-title">iPart/iAssembly</div></div>

<div class="grp g-sim"><div class="grp-body"><div class="big"><svg class="i40" viewBox="0 0 40 40"><path d="M2 11l8-9h26v26l-7 9H2z" fill="url(#str)" stroke="#22335f" stroke-width="1.300"/><path d="M28 10v27l8-9V2z" fill="#3049ae" opacity=".6"/><path d="M27 35h7v-4l6 5-6 5v-4h-7z" fill="#1f3864"/><circle cx="25" cy="35" r="5.500" fill="#b9d3ef" stroke="#4d78ad" stroke-width="1.300"/></svg><div class="cap2">Stress<br>Analysis</div></div></div><div class="grp-title">Simulation</div></div>

<div class="grp g-conv"><div class="grp-body"><div class="big"><svg class="i40" viewBox="0 0 40 40"><path d="M15 3q9 14 24 13l-7 11q-13 2-19-13l-11 10q4-16 13-21z" fill="url(#gb)" stroke="#4670aa" stroke-width="1.300"/><path d="M2 24l12-9v15L2 39z" fill="#f4f6fa" stroke="#4d6488" stroke-width="1.300"/><path d="M14 15L15 3 2 14v10z" fill="#5d8ccb"/><path d="M26 33h7v-4l6 5-6 5v-4h-7z" fill="#33195c"/><circle cx="24" cy="34" r="5" fill="#cbb4ec" stroke="#6b48a4" stroke-width="1.300"/></svg><div class="cap2">Convert to<br>Sheet Metal</div></div></div><div class="grp-title">Convert</div></div>
<div class="grp-body pl3"><div class="ibtn wide"><svg class="i20" viewBox="0 0 20 20"><circle cx="10" cy="10" r="8.800" fill="#e2e4e8" stroke="#555" stroke-width="1.600"/><path d="M4 6h12l-6 8z" fill="#222"/></svg><i class="tri m8"></i></div></div>
</section>

<!-- workspace -->
<main class="workspace d-flex flex-shrink-0">
<aside class="sidepane">
<div class="pane-head d-flex align-items-center"><div class="pane-tab d-flex align-items-center"><span>Model</span><svg class="pane-x" width="9" height="9"><path d="M0 0l8 8M8 0L0 8" stroke="#555" stroke-width="1.400"/></svg></div>
<svg class="m6" width="9" height="9"><path d="M4.500 0v9M0 4.500h9" stroke="#ddd" stroke-width="2"/></svg>
<svg class="ms-auto pane-tools" width="38" height="14"><circle cx="5.500" cy="5.500" r="4.700" fill="none" stroke="#ccc" stroke-width="1.200"/><path d="M9 9l4 4M24 2.500h12M24 7h12M24 11.500h12" stroke="#ccc" stroke-width="1.300"/></svg></div>
<div class="tree position-relative">
<svg class="tree-lines position-absolute" width="24" height="200"><path d="M10.500 26V193M11 117.500h10M11 142.500h10M18 42.500h4M18 67.500h4M18 92.500h4M18 167.500h4M11 193.500h10" stroke="#777" stroke-dasharray="1 1" fill="none"/><g fill="#fff"><path d="M6 32h10v14H6zM6 57h10v14H6zM6 82h10v14H6zM6 157h10v14H6z"/></g><path d="M7.500 34l5 5-5 5M7.500 59l5 5-5 5M7.500 84l5 5-5 5M7.500 159l5 5-5 5" fill="none" stroke="#999" stroke-width="2.200"/></svg>
<div class="node pl3"><svg class="i20" viewBox="0 0 20 20"><path d="M1 6l5-5h13v12l-5 6H1z" fill="#fff6c0" stroke="#8e5a12" stroke-width="1.500"/><path d="M1 6h13v13H1z" fill="#fbd91f" stroke="#8e5a12" stroke-width="1.300"/><path d="M14 6l5-5v12l-5 6z" fill="#efe2b0" stroke="#a05d12"/></svg><span>Unit4IsometricShape1_4.2_SPM2.ipt</span></div>
<div class="node pl23"><svg class="i20" viewBox="0 0 20 20"><path d="M.5 2V1h8v2h11v13H.5z" fill="#f6dca8" stroke="#a4803c"/><path d="M8 13l2-2h5v5l-2 3H8zM14 10l2-1h4v5l-2 2h-4z" fill="#dbe2f0" stroke="#4a5a80"/></svg><span>Solid Bodies(1)</span></div>
<div class="node pl23"><svg class="i20" viewBox="0 0 20 20"><path d="M2.500 3v13h4M2.500 6h6M9 7v9M12 11h4" fill="none" stroke="#333"/><path d="M0 0h6v3H0zM7 5h7v3H7zM14 10h6v3h-6zM6 15h6v3H6z" fill="#2f6fb3" stroke="#0e2d52" stroke-width=".7"/></svg><span>View: Master</span></div>
<div class="node pl23"><svg class="i20" viewBox="0 0 20 20"><path d="M.5 3V1h8v2h11v15H.5z" fill="#f6dca8" stroke="#a4803c"/><path d="M1 5.500h18" stroke="#c9a565"/></svg><span>Origin</span></div>
<div class="node pl23"><svg class="i20" viewBox="0 0 20 20"><rect x=".5" y=".5" width="19" height="18" fill="#e0e0e0" stroke="#999"/><path d="M6 1v16h13M1 12h18" fill="none" stroke="#666" stroke-width="1.600"/><path d="M7 12L17 2l2 2-4 7z" fill="#f7f7f7" stroke="#888"/></svg><span>Sketch1</span></div>
<div class="node pl23"><svg class="i20" viewBox="0 0 20 20"><rect x=".5" y=".5" width="19" height="18" fill="#d7e7f5" stroke="#222"/><path d="M4 6v9h12" fill="none" stroke="#1a2a3f" stroke-width="1.600"/><path d="M6 15q1-6 8-6" fill="none" stroke="#2b7fd0" stroke-width="2"/><path d="M9 10L17 2l2 2-8 7z" fill="#f2c12e" stroke="#7c5a13" stroke-width=".6"/><path d="M1 0h7v3L7 4v3H2V4L1 3z" fill="#d9653a" stroke="#7e2f12" stroke-width=".7"/></svg><span>Sketch2</span></div>
<div class="node pl23"><svg class="i20" viewBox="0 0 20 20"><path d="M1 4l3-3h10v14l-4 4H1z" fill="#1d3e6e" stroke="#111" stroke-width="1.200"/><path d="M1 5h8v14H1z" fill="#fbe323" stroke="#222"/><path d="M10 5l3-3v13l-3 3z" fill="#8f8411"/><path d="M17 18V3M15 5l2-4 2 4z" stroke="#d41919" stroke-width="1.500" fill="#d41919"/></svg><span>Extrusion1</span></div>
<div class="node pl23"><svg class="i20" viewBox="0 0 20 20"><path d="M6 .5h7l5.500 5.500v7L13 18.500H6L.5 13V6z" fill="#e2383c" stroke="#5b2325"/><ellipse cx="8" cy="6" rx="6" ry="4" fill="#fff" opacity=".35"/><path d="M5 5l9 9M14 5l-9 9" stroke="#fff" stroke-width="2.500"/></svg><span>End of Part</span></div>
</div>
</aside>
<div class="splitter"></div>
<div class="flex-grow-1">
<div class="viewport">
<div class="vignette"></div>
<div class="origin-dot"></div>
<div class="solid-part"><div class="face f1"></div><div class="face f2"></div><div class="face f3"></div></div>
<svg class="triad" width="60" height="60"><path d="M16 12h16" stroke="#b00000" stroke-width="1.200"/><path d="M28 6.500v11l10-5.500z" fill="#a00"/><path d="M10.500 18v12" stroke="#11a" stroke-width="1.300"/><path d="M4 31.500h12.500L10.300 42z" fill="#1414c8"/><circle cx="10.500" cy="12.500" r="5.700" fill="#0ca012"/><path d="M8 9l2.500 3.500L13 9M10.500 12.500V16" fill="none" stroke="#0fe01a" stroke-width="1.300"/><text x="43" y="16.500" font-family="Noto Sans" font-size="12" fill="#f22">X</text><text x="7" y="53" font-family="Noto Sans" font-size="12" fill="#22f">Z</text></svg>
<svg class="mdi" width="52" height="12"><path d="M2 6.500h12" stroke="#30353d" stroke-width="5"/><path d="M3 6.500h10" stroke="#fff" stroke-width="2.500"/><path d="M25 1h7v7h-2M22.500 3.500h6.500v6.500h-6.500z" fill="#333" stroke="#fff" stroke-width="1.700"/><path d="M43.500 1.500l8 8M51.500 1.500l-8 8" stroke="#fff" stroke-width="2.500"/></svg>
<div class="cube"><div>TOP</div></div>
<svg class="navpal" width="34" height="199" viewBox="0 0 34 199"><rect x=".5" y=".5" width="33" height="197" rx="4" fill="#7d828d" stroke="#3a404b" stroke-width="1.500"/><g fill="#5a5f68"><circle cx="26" cy="7" r="4"/><circle cx="26" cy="191" r="4"/></g><path d="M24 5l4 4M28 5l-4 4M24 190h4M24 192h4" stroke="#c9ccd1" stroke-width="1.100"/><path d="M17 22.500h10.500V34A10.500 10.500 0 1 1 17 22.500z" fill="#a9adb4" stroke="#d0d3d7" stroke-width="1.300"/><circle cx="17" cy="33.500" r="6" fill="#a4a8b0" stroke="#5b6069" stroke-width="1.200"/><path d="M10 40l3-3M24 40l-3-3" stroke="#5b6069"/><path d="M14 54h6l-3 3zM14 116h6l-3 3zM14 150h6l-3 3z" fill="#555a63"/><path d="M4 61.500h26" stroke="#5a5f69"/><path d="M10 75l3 2-1-7h2l1 5v-7h2l1 7 2-6h2l-1 7 3-3 1 1-4 8q-7 5-10-1l-3-5z" fill="#d4d6da" stroke="#5b6069" stroke-width=".7"/><path d="M20 103l5 5" stroke="#50555c" stroke-width="3"/><circle cx="16" cy="98" r="6" fill="#b9bdc3" stroke="#555" stroke-width="1.200"/><path d="M14 94h3l2 2v6h-5z" fill="#eee" stroke="#666" stroke-width=".7"/><g fill="none" stroke="#5f646d" stroke-width="1.200"><ellipse cx="17" cy="134" rx="7.500" ry="3.500"/><ellipse cx="17" cy="134" rx="3" ry="7.500"/></g><path d="M10 166h15v10H10zM12 166l10-4v3" fill="#cdd0d4" stroke="#777" stroke-width=".8"/><path d="M13 168.500h9v5h-9z" fill="#8b9099" stroke="#555"/></svg>
</div>
<div class="docbar d-flex align-items-center">
<svg class="m5" width="137" height="20" viewBox="0 0 137 20" fill="none" stroke="#c9c9c9" stroke-width="1.400"><path d="M4 8H1V1h12v3M8 13H5V6h12v3M9 11h11v8H9zM1 2h12M5 7h12M9 12h11"/><path d="M31 2h7v6h-7zM41 2h7v6h-7zM31 12h7v7h-7zM41 12h7v7h-7zM31 3h7M41 3h7M31 13h7M41 13h7M61 2h18v6H61zM61 12h18v7H61zM61 3h18M61 13h18M91 1h7v18h-7zM101 1h7v18h-7zM91 2h7M101 2h7"/><path d="M124 15l6-9.500 6 9.500z" fill="#ddd" stroke="none"/></svg>
<div class="home-tab m8">My Home</div>
<div class="doc-tab d-flex align-items-center"><span>Unit4IsometricSh...ipt</span><svg class="m10" width="11" height="11"><path d="M1 1l9 9M10 1l-9 9" stroke="#555" stroke-width="2.700"/></svg></div>
</div>
</div>
</main>

<div class="statusbar d-flex flex-shrink-0 justify-content-between"><span>Ready</span><div class="d-flex"><div class="cell">1</div><div class="cell cell-last">1</div></div></div>

<!-- Windows taskbar -->
<footer class="taskbar d-flex flex-shrink-0 align-items-center">
<svg class="m20" width="20" height="20" viewBox="0 0 20 20" fill="#fff"><path d="M0 3l8-1.100V9.500H0zM9 1.700L20 0v9.500H9zM0 10.500h8v7.600L0 17zM9 10.500h11V20L9 18.300z"/></svg>
<svg class="m37" width="26" height="20" fill="none" stroke="#fff" stroke-width="1.200"><path d="M5.500 1.500h15v17h-15zM4 4H1v12h3M22 4h3v12h-3"/></svg>
<div class="task m26 pl8"><svg width="29" height="29" viewBox="0 0 29 29"><path d="M3 6l3 3q3-3 6-2 1-5 6-7 0 4 4 6 7 5 6 13-2 10-13 10Q2 28 1 17 1 10 3 6z" fill="url(#ff)"/><circle cx="14.500" cy="16" r="6" fill="#7a3fe0"/><path d="M5 11q5-3 9 0-4 1-4 5 3 6 10 3-4 7-11 4-6-4-4-12z" fill="#ff7a1a"/></svg><span class="m5">Activity 5.2b: Introd...</span></div>
<div class="task m11 pl13"><svg width="19" height="26" viewBox="0 0 19 26"><path d="M4 0h13v18l2 1v3H4z" fill="#f3cf68"/><path d="M0 0l6 4v22l-6-4z" fill="#ffe7a0"/></svg><span class="m10">IsometricShapes3</span></div>
<svg class="m22" width="28" height="26" viewBox="0 0 28 26"><path d="M14 3h13v20H14z" fill="#fff" stroke="#1f7244" stroke-width="1.500"/><path d="M17 7h8M17 11h8M17 15h8M17 19h8" stroke="#1f7244" stroke-width="2.500"/><path d="M0 3l16-3v26L0 23z" fill="#1f7a47"/><text x="8" y="18.500" text-anchor="middle" font-family="Liberation Sans" font-weight="700" font-size="15" fill="#fff">X</text></svg>
<div class="task task-on m18 pl13"><svg width="30" height="30" viewBox="0 0 30 30"><rect width="30" height="30" fill="#f9d9c0"/><rect x=".5" y=".5" width="29" height="29" fill="none" stroke="#fff"/><path d="M9 3h12v4l-3 1v10l3 1v4H9v-4l3-1V8L9 7z" fill="url(#inv)"/><text x="22" y="28" text-anchor="middle" font-family="Liberation Sans" font-weight="700" font-size="5.500" fill="#e87a22" letter-spacing="0">PRO</text></svg><span class="m4">Autodesk Inventor ...</span></div>
<div class="task m6 pl8"><svg width="28" height="26" viewBox="0 0 28 26"><path d="M0 5l7-1v17l-7-1z" fill="#8f9698"/><path d="M5 1l22 2-2 16-19-2z" fill="#e4e9ec" stroke="#9aa4a8"/><path d="M8 3.500l17 2-2 11-15-2z" fill="#f6fbff"/><path d="M9 12l3-4 2 5 2-6 2 6 3-1" fill="none" stroke="#2f8fd0" stroke-width="1.200"/><path d="M12 19l6 1v2l4 2q-6 4-12 0l3-2z" fill="#cdd3d6"/></svg><span class="m6">Task Manager</span></div>
<svg class="m20" width="29" height="29" viewBox="0 0 29 29"><path d="M14 4q12 0 13 11-1 12-14 12-4 0-3-4t-5-3q-5 0-4-6Q3 5 14 4z" fill="#b9dcf0" stroke="#6f9ab8"/><circle cx="9" cy="11" r="2.600" fill="#4fb04a"/><circle cx="15" cy="8" r="2.600" fill="#f0a12b"/><circle cx="5" cy="16" r="2.200" fill="#d84343"/><circle cx="11" cy="17" r="1.800" fill="#333"/><path d="M14 28l8-20 2 1-7 19z" fill="#d98532"/><path d="M21 8l1-7 6 1-3 7z" fill="#b78349"/></svg>
<svg class="ms-auto" width="300" height="24" viewBox="0 0 300 24"><path d="M1 4.500h14v15H1z" fill="#41352a" stroke="#aaa" stroke-width="1.300"/><path d="M4 5v14M7.500 5v14M11 5v14M1 8h14M1 12h14M1 16h14" stroke="#6d6156" stroke-width=".6"/><path d="M40 20l7-14 4 2-5 9z" fill="#77b82a"/><path d="M40 20h12l-4-4h-6z" fill="#1bb5b0"/><path d="M50 11l6 8h-4l-5-5z" fill="#2a6fd0"/><circle cx="52" cy="8" r="5.500" fill="#e8541f"/><path d="M52 4v8M48 8h8M49.500 5.500l5 5M54.500 5.500l-5 5" stroke="#fff" stroke-width="1.100"/><rect x="78" y="2" width="20" height="20" fill="#1e88ff"/><path d="M81 6.500l3 9.500 2.200-5.500L88 15l1.800-4.500L92 16l3-9.500-2.700 3.500L90 6.500 88 11l-2-4.500-2.300 3.500z" fill="#fff"/><path d="M128 2l10 3q1 12-10 17Q117 17 118 5z" fill="#fff"/><path d="M128 2v20M118 12h20" stroke="#3a240f" stroke-width="1.300"/><rect x="158" y="2" width="20" height="20" rx="1" fill="#333b3b"/><path d="M168 6h9v12h-9z" fill="#76b900"/><path d="M161 12q7-8 14 0-7 7-14 0z" fill="none" stroke="#4f8f10" stroke-width="2"/><circle cx="168" cy="12" r="2.500" fill="#3b6b10"/><path d="M200 8h17v10h-17z" fill="#fff" stroke="#fff" stroke-width="2"/><path d="M201 9h15v8h-15z" fill="none" stroke="#3a240f"/><circle cx="213" cy="17" r="5.500" fill="#0a8a1e"/><path d="M213 13.500q4 4 0 6.500-4-2.500 0-6.500z" fill="#fff"/><g fill="none" stroke="#ddd" stroke-width="1.400"><path d="M242 20q0-13 14-14M246 20q0-9 10-10M250 20q0-6 6-6"/></g><circle cx="255" cy="19" r="2" fill="#fff"/><path d="M279 9h2l4-3.500v13L281 15h-2zM289 9l7 7M296 9l-7 7" fill="none" stroke="#fff" stroke-width="1.200"/></svg>
<div class="clock text-center">2:50 PM<br>1/13/2020</div>
<i class="peek"></i>
</footer>
<script src="https://cdn.jsdelivr.net/npm/bootstrap@5.3.0/dist/js/bootstrap.bundle.min.js"></script>
</body>
</html>
